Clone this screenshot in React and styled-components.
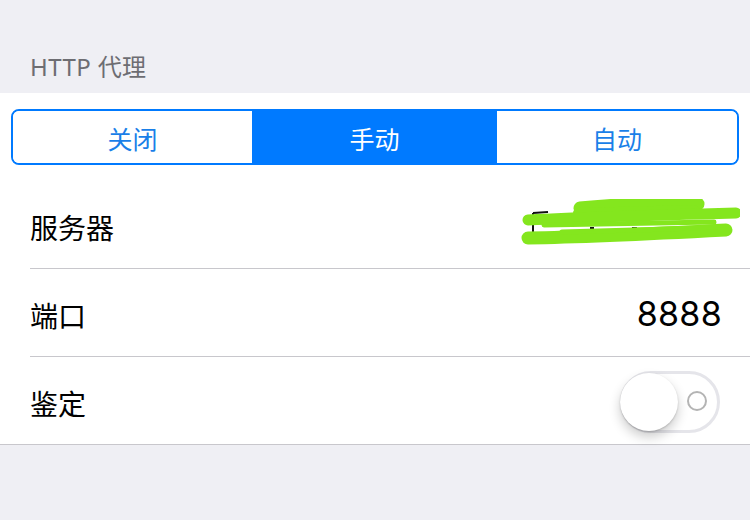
import React from 'react';
import styled, { createGlobalStyle } from 'styled-components';

const GlobalStyle = createGlobalStyle`
  html, body {
    margin: 0;
    padding: 0;
    background: #efeff4;
    font-family: "Noto Sans", "Noto Sans CJK SC", sans-serif;
    -webkit-font-smoothing: antialiased;
  }
`;

const Page = styled.div`
  width: 750px;
  height: 520px;
  background: #efeff4;
`;

const SectionHeader = styled.div`
  height: 93px;
  box-sizing: border-box;
  display: flex;
  align-items: flex-end;
  padding: 0 30px 10px;
  font-size: 24px;
  color: #6d6d72;
  font-family: "Noto Sans", "Noto Sans CJK SC", sans-serif;
  letter-spacing: 0.4px;
`;

const Group = styled.div`
  background: #fff;
  border-bottom: 1px solid #c8c7cc;
  padding-top: 16px;
`;

const Segmented = styled.div`
  margin: 0 11px;
  height: 56px;
  box-sizing: border-box;
  border: 2px solid #007aff;
  border-radius: 8px;
  overflow: hidden;
  display: grid;
  grid-template-columns: 239px 245px 1fr;
`;

const Segment = styled.div`
  display: flex;
  align-items: center;
  justify-content: center;
  padding-top: 1px;
  font-size: 25px;
  font-family: "Noto Sans CJK SC", sans-serif;
  color: ${p => (p.active ? '#fff' : '#1a7fe8')};
  background: ${p => (p.active ? '#007aff' : '#fff')};
`;

const Rows = styled.div`
  margin-top: 16px;
`;

const Row = styled.div`
  padding-left: 30px;
`;

const RowInner = styled.div`
  height: 87px;
  display: flex;
  align-items: center;
  justify-content: space-between;
  padding-right: 30px;
  border-bottom: ${p => (p.last ? 'none' : '1px solid #c8c7cc')};
`;

const Label = styled.div`
  font-size: 28px;
  color: #000;
  padding-top: 4px;
  font-family: "Noto Sans CJK SC", sans-serif;
`;

const Value = styled.div`
  font-size: 34px;
  color: #000;
  padding-top: 2px;
  margin-right: -2px;
  font-family: Inter, "Noto Sans", sans-serif;
  letter-spacing: 0.3px;
`;

const Scribble = styled.svg`
  width: 222px;
  height: 52px;
  margin-right: -20px;
`;

const Switch = styled.div`
  position: relative;
  width: 100px;
  height: 62px;
  margin-top: 2px;
  box-sizing: border-box;
  border: 3px solid #e5e5ea;
  border-radius: 31px;
  background: #fff;
`;

const Knob = styled.div`
  position: absolute;
  left: -3px;
  top: -1px;
  width: 58px;
  height: 58px;
  border-radius: 50%;
  background: #fff;
  box-shadow: 0 6px 12px rgba(0, 0, 0, 0.2), 0 1px 2px rgba(0, 0, 0, 0.18);
`;

const OffMark = styled.div`
  position: absolute;
  right: 10px;
  top: 17px;
  width: 16px;
  height: 16px;
  border: 2.5px solid #b4b4b4;
  border-radius: 50%;
`;

export default function App() {
  return (
    <Page>
      <GlobalStyle />
      <SectionHeader>HTTP 代理</SectionHeader>
      <Group>
        <Segmented>
          <Segment>关闭</Segment>
          <Segment active>手动</Segment>
          <Segment>自动</Segment>
        </Segmented>
        <Rows>
          <Row>
            <RowInner>
              <Label>服务器</Label>
              <Scribble viewBox="0 0 222 52">
                <g stroke="#111" strokeWidth="2" fill="none">
                  <path d="M15 14 L15 38" />
                  <path d="M15 14 L30 13" />
                  <path d="M72 29 L76 29 M114 29 L119 29 M154 29 L159 29 M192 29 L197 29" />
                </g>
                <g stroke="#84e61e" strokeLinecap="round" fill="none">
                  <path d="M62 9 C100 5 150 4 180 5" strokeWidth="13" />
                  <path d="M60 14 L176 11" strokeWidth="10" />
                  <path d="M10 21 C70 18 140 16 218 14" strokeWidth="11" />
                  <path d="M26 26 C80 25 150 24 196 23" strokeWidth="5" />
                  <path d="M10 39 C70 38 150 34 208 31" strokeWidth="13" />
                  <path d="M44 33 C90 32 150 30 200 28" strokeWidth="5" />
                </g>
              </Scribble>
            </RowInner>
          </Row>
          <Row>
            <RowInner>
              <Label>端口</Label>
              <Value>8888</Value>
            </RowInner>
          </Row>
          <Row>
            <RowInner last>
              <Label>鉴定</Label>
              <Switch>
                <Knob />
                <OffMark />
              </Switch>
            </RowInner>
          </Row>
        </Rows>
      </Group>
    </Page>
  );
}
